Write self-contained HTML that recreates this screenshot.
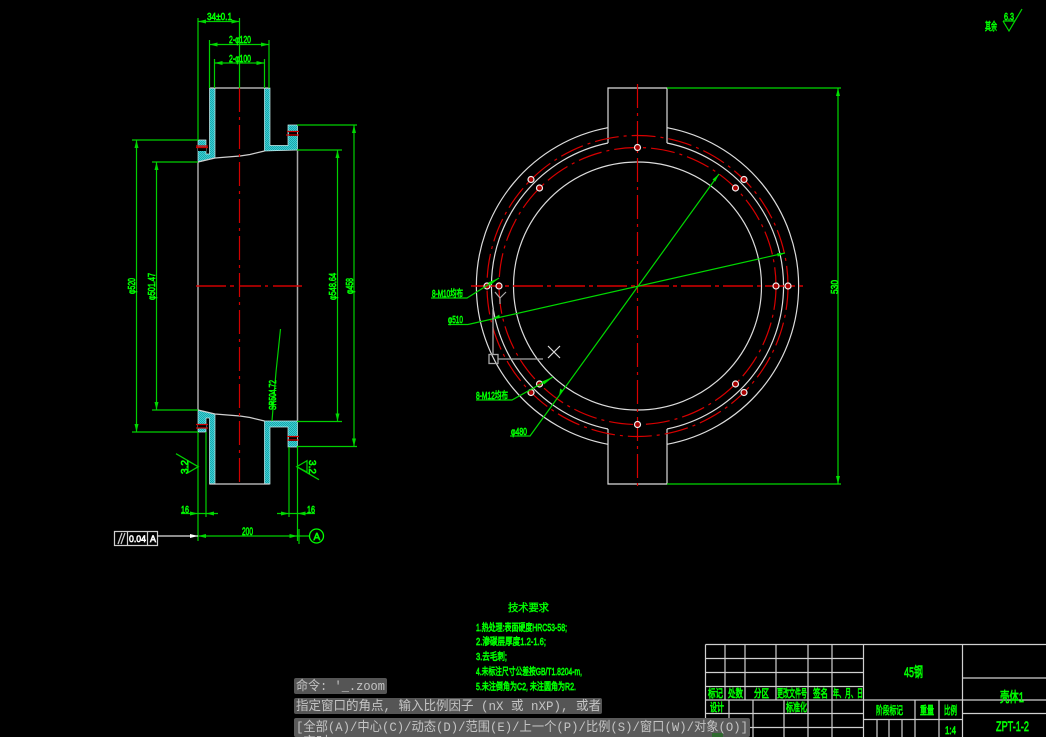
<!DOCTYPE html>
<html><head><meta charset="utf-8"><style>
html,body{margin:0;padding:0;background:#000;width:1046px;height:737px;overflow:hidden}
svg{display:block}
.t{font-family:"Liberation Sans","Noto Sans CJK SC",sans-serif;fill:#0f0;stroke:#0f0;stroke-width:.65}
.c{font-family:"Liberation Mono","Noto Sans CJK SC",monospace;fill:#c4c4c4;font-size:13px}
</style></head><body>
<svg width="1046" height="737" viewBox="0 0 1046 737" xmlns="http://www.w3.org/2000/svg">
<defs><pattern id="h" width="2" height="2" patternUnits="userSpaceOnUse"><rect width="2" height="2" fill="#3cd0d4"/><rect width="1" height="1" fill="#1aa4aa"/><rect x="1" y="1" width="1" height="1" fill="#1aa4aa"/></pattern></defs>
<rect width="1046" height="737" fill="#000"/>

<!-- hatch -->
<g fill="url(#h)" stroke="#c8eeee" stroke-width=".7">
<path d="M209.500 88H215V158L198 162V140H206V154H209.500Z"/>
<path d="M264.500 88H270V145.500H288V125H297.500V150L264.500 151Z"/>
<path d="M198 410L215 414V484H209.500V418H206V432H198Z"/>
<path d="M264.500 421H297.500V447H288V427H270V484H264.500Z"/>
</g>
<g fill="#000"><rect x="198" y="148" width="8" height="3"/><rect x="289" y="132" width="8" height="4"/><rect x="198" y="425" width="8" height="3"/><rect x="289" y="437" width="8" height="4"/></g>

<!-- white lines left view -->
<g fill="none" stroke="#d0d0d0" stroke-width="1.200">
<path d="M209.500 88H269.500"/><path d="M209.500 484H269.500"/>
<path d="M198 162V410M297.500 150V421" stroke="#a8a8a8" stroke-width="1.500"/>
<path d="M198 162L215 158L240 156L250 154.500L264.500 151"/>
<path d="M198 410L215 414L240 416L250 417.500L264.500 421"/>
</g>

<!-- red lines left -->
<g fill="none" stroke="#d00000" stroke-width="1.200">
<path d="M239.500 88V484" stroke-dasharray="24 5 3 5"/>
<path d="M196 286H226M230 286H234M240 286H261M265 286H268M273 286H302" stroke-width="1.500"/>
<path d="M196 147.500H208M196 146H208M287 131.500H299M286 135H299M196 424.500H208M196 428H208M287 436.500H299M287 440H299"/>
</g>

<!-- green dims left -->
<g fill="none" stroke="#00d000" stroke-width="1.200">
<path d="M198 18V140M239.500 18V88M198 21.500H239.500"/>
<path d="M209.500 40V88M269 40V88M209.500 44.500H269"/>
<path d="M214.500 59V88M264.500 59V88M214.500 63H264.500"/>
<path d="M132 140H198M136.500 140V432M132 432H198"/>
<path d="M152 162H198M156.500 162V410M152 410H198"/>
<path d="M297 125H357M354 125V446.500M297 446.500H357"/>
<path d="M297 150H342M337.500 150V421.500M297 421.500H342"/>
<path d="M280.500 329L276 372L272 421"/>
<path d="M198 432V541M206 432V517M297.500 447V541M289 447V517"/>
<path d="M181 513.500H218M277 513.500H315"/>
<path d="M198 536H309M299 529V544"/>
<path d="M176 453.700L198.300 466.700L188 472.700V461L198.300 466.700"/>
<path d="M319 479.700L296.700 466.700L307 460.700V472L296.700 466.700"/>
<circle cx="316.500" cy="536" r="7" stroke="#0f0" stroke-width="1.300"/>
</g>
<g fill="#00d800">
<path d="M198 21.500l8-2v4zM239.500 21.500l-8-2v4zM209.500 44.500l8-2v4zM269 44.500l-8-2v4zM214.500 63l8-2v4zM264.500 63l-8-2v4z"/>
<path d="M136.500 140l-2 8h4zM136.500 432l-2-8h4zM156.500 162l-2 8h4zM156.500 410l-2-8h4zM354 125l-2 8h4zM354 446.500l-2-8h4zM337.500 150l-2 8h4zM337.500 421.500l-2-8h4z"/>
<path d="M198 513.500l-8-2v4zM206 513.500l8-2v4zM289 513.500l-8-2v4zM297.500 513.500l8-2v4zM198 536l8-2v4zM297.500 536l-8-2v4zM272 410l-1.500-8h3z"/>
</g>

<!-- tolerance box -->
<g fill="none" stroke="#d0d0d0" stroke-width="1.200">
<rect x="114.500" y="531.500" width="43" height="14"/><path d="M127.500 531.500V545.500M147.500 531.500V545.500"/>
<path d="M118 544L122 533M121 544L125 533"/>
</g>
<path d="M157.500 536H198" stroke="#e0e0e0" stroke-width="1.200"/><path d="M198 536l-8-2v4z" fill="#fff"/>

<!-- right view: circles -->
<g fill="none" stroke="#dcdcdc" stroke-width="1.200">
<path d="M608 127.700A161 161 0 0 0 608 444.300M667 127.700A161 161 0 0 1 667 444.300"/>
<path d="M608 143A146 146 0 0 0 608 429M667 143A146 146 0 0 1 667 429"/>
<path d="M608 143V88H667V143M608 429V484H667V429"/>
<circle cx="637.500" cy="286" r="124"/>
</g>
<g fill="none" stroke="#d80000" stroke-width="1.200">
<circle cx="637.500" cy="286" r="150.500" stroke-dasharray="24 5 3 5"/>
<circle cx="637.500" cy="286" r="138.500" stroke-dasharray="24 5 3 5"/>
<path d="M637.500 84V488" stroke-dasharray="24 5 3 5"/>
<path d="M471 286H805" stroke-dasharray="30 4 4 4" stroke-width="1.500"/>
</g>
<g fill="#a00" stroke="#f0f0f0" stroke-width="1.200">
<circle cx="531" cy="179.500" r="3"/><circle cx="744" cy="179.500" r="3"/><circle cx="487" cy="286" r="3"/><circle cx="788" cy="286" r="3"/><circle cx="531" cy="392.500" r="3"/><circle cx="744" cy="392.500" r="3"/>
<circle cx="637.500" cy="147.500" r="3"/><circle cx="539.500" cy="188" r="3"/><circle cx="735.500" cy="188" r="3"/><circle cx="499" cy="286" r="3"/><circle cx="776" cy="286" r="3"/><circle cx="539.500" cy="384" r="3"/><circle cx="735.500" cy="384" r="3"/><circle cx="637.500" cy="424.500" r="3"/>
</g>
<!-- right view dims -->
<g fill="none" stroke="#00d800" stroke-width="1.200">
<path d="M667 88H841M667 484H841M838 88V484"/>
<path d="M510 436H530L719 174"/>
<path d="M448 324.500H468L785 253"/>
<path d="M431 298H467L499 278"/>
<path d="M476 400H512L553 377"/>
</g>
<g fill="#00e000">
<path d="M838 88l-2 8h4zM838 484l-2-8h4z"/>
<path d="M719 174l-6.500 5.500 2.800 2zM785 253l-8 .2 .8 3.400z"/>
<path d="M499 278l-11 4.500 2 3zM553 377l-11 4.500 2 3z"/>
<path d="M492 319l8-1 -.8-3.400zM559 396l4-5.500 -2.800-2z"/>
</g>

<!-- UCS -->
<g fill="none" stroke="#a8a8a8" stroke-width="1.300">
<path d="M493 309V354M498 359H543"/><rect x="489" y="354.500" width="9" height="9"/>
</g>
<path d="M495 292L500 298L506 292M500 298V304" fill="none" stroke="#aaa" stroke-width="1.200"/>
<path d="M548 346L560 358M560 346L548 358" stroke="#ddd" stroke-width="1.200"/>

<!-- top right -->
<path d="M1003 21H1015M1003 21L1009 31L1022 9" fill="none" stroke="#00d800" stroke-width="1.200"/>
<text class="t" x="985" y="30" font-size="11" textLength="12" lengthAdjust="spacingAndGlyphs">其余</text>
<text class="t" x="1004" y="20" font-size="10" textLength="10" lengthAdjust="spacingAndGlyphs">6.3</text>

<!-- title block -->
<g fill="none" stroke="#d0d0d0" stroke-width="1.200">
<path d="M705.500 644.500H1046M705.500 658.500H863.500M705.500 672.500H863.500M705.500 686.500H863.500M705.500 700H1046M705.500 713.500H863.500M705.500 727.500H863.500"/>
<path d="M705.500 644.500V737M725 644.500V700M745 644.500V700M776 644.500V700M808 644.500V737M832 644.500V737M863.500 644.500V737M962.500 644.500V737"/>
<path d="M729 700V737M753 700V737M784 700V737"/>
<path d="M863.500 719.500H962.500M962.500 678H1046M962.500 713.500H1046M915 700V737M939 700V737M877 719.500V737M889 719.500V737M902 719.500V737"/>
</g>
<text class="t" x="708" y="697" font-size="11" textLength="15" lengthAdjust="spacingAndGlyphs">标记</text>
<text class="t" x="728" y="697" font-size="11" textLength="15" lengthAdjust="spacingAndGlyphs">处数</text>
<text class="t" x="754" y="697" font-size="11" textLength="15" lengthAdjust="spacingAndGlyphs">分区</text>
<text class="t" x="777" y="697" font-size="11" textLength="30" lengthAdjust="spacingAndGlyphs">更改文件号</text>
<text class="t" x="813" y="697" font-size="11" textLength="15" lengthAdjust="spacingAndGlyphs">签名</text>
<text class="t" x="833" y="697" font-size="11" textLength="30" lengthAdjust="spacingAndGlyphs">年、月、日</text>
<text class="t" x="710" y="711" font-size="11" textLength="14" lengthAdjust="spacingAndGlyphs">设计</text>
<text class="t" x="786" y="711" font-size="11" textLength="21" lengthAdjust="spacingAndGlyphs">标准化</text>
<text class="t" x="904" y="677" font-size="14" textLength="19" lengthAdjust="spacingAndGlyphs">45钢</text>
<text class="t" x="876" y="714" font-size="11" textLength="27" lengthAdjust="spacingAndGlyphs">阶段标记</text>
<text class="t" x="920" y="714" font-size="11" textLength="14" lengthAdjust="spacingAndGlyphs">重量</text>
<text class="t" x="944" y="714" font-size="11" textLength="13" lengthAdjust="spacingAndGlyphs">比例</text>
<text class="t" x="945" y="734" font-size="11" textLength="11" lengthAdjust="spacingAndGlyphs">1:4</text>
<text class="t" x="1000" y="702" font-size="14" textLength="24" lengthAdjust="spacingAndGlyphs">壳体1</text>
<text class="t" x="996" y="731" font-size="14" textLength="33" lengthAdjust="spacingAndGlyphs">ZPT-1-2</text>

<!-- tech req -->
<text class="t" x="508" y="611" font-size="10" letter-spacing="1" style="font-size:10.500px;stroke-width:.35" textLength="42" lengthAdjust="spacing">技术要求</text>
<text class="t" x="476" y="631" font-size="10" textLength="91" lengthAdjust="spacingAndGlyphs">1.热处理:表面硬度HRC53-58;</text>
<text class="t" x="476" y="645" font-size="10" textLength="70" lengthAdjust="spacingAndGlyphs">2.渗碳层厚度1.2-1.6;</text>
<text class="t" x="476" y="660" font-size="10" textLength="31" lengthAdjust="spacingAndGlyphs">3.去毛刺;</text>
<text class="t" x="476" y="675" font-size="10" textLength="106" lengthAdjust="spacingAndGlyphs">4.未标注尺寸公差按GB/T1.8204-m,</text>
<text class="t" x="476" y="690" font-size="10" textLength="100" lengthAdjust="spacingAndGlyphs">5.未注倒角为C2, 未注圆角为R2.</text>

<!-- dim text -->
<text class="t" x="207" y="20" font-size="10" textLength="25" lengthAdjust="spacingAndGlyphs">34±0.1</text>
<text class="t" x="229" y="43" font-size="10" textLength="22" lengthAdjust="spacingAndGlyphs">2-φ120</text>
<text class="t" x="229" y="62" font-size="10" textLength="22" lengthAdjust="spacingAndGlyphs">2-φ100</text>
<text class="t" x="181" y="513" font-size="10" textLength="8" lengthAdjust="spacingAndGlyphs">16</text>
<text class="t" x="307" y="513" font-size="10" textLength="8" lengthAdjust="spacingAndGlyphs">16</text>
<text class="t" x="242" y="535" font-size="11" textLength="11" lengthAdjust="spacingAndGlyphs">200</text>
<text class="t" x="129" y="542" font-size="9" textLength="17" lengthAdjust="spacingAndGlyphs" style="fill:#fff;stroke:#fff">0.04</text>
<text class="t" x="150" y="542" font-size="9" style="fill:#fff;stroke:#fff">A</text>
<text class="t" x="313.500" y="540" font-size="10">A</text>
<text class="t" x="432" y="297" font-size="10" textLength="31" lengthAdjust="spacingAndGlyphs">8-M10均布</text>
<text class="t" x="448" y="323" font-size="10" textLength="15" lengthAdjust="spacingAndGlyphs">φ510</text>
<text class="t" x="476" y="399" font-size="10" textLength="32" lengthAdjust="spacingAndGlyphs">8-M12均布</text>
<text class="t" x="511" y="435" font-size="10" textLength="16" lengthAdjust="spacingAndGlyphs">φ480</text>
<g font-size="10">
<text class="t" transform="translate(135,294) rotate(-90)" textLength="16" lengthAdjust="spacingAndGlyphs">φ520</text>
<text class="t" transform="translate(155,300) rotate(-90)" textLength="27" lengthAdjust="spacingAndGlyphs">φ501.47</text>
<text class="t" transform="translate(336,300) rotate(-90)" textLength="27" lengthAdjust="spacingAndGlyphs">φ548.64</text>
<text class="t" transform="translate(353,294) rotate(-90)" textLength="16" lengthAdjust="spacingAndGlyphs">φ458</text>
<text class="t" transform="translate(276,410) rotate(-90)" textLength="30" lengthAdjust="spacingAndGlyphs">SR504.72</text>
<text class="t" transform="translate(188,474) rotate(-90)" textLength="14" lengthAdjust="spacingAndGlyphs">3.2</text>
<text class="t" transform="translate(309,460) rotate(90)" textLength="14" lengthAdjust="spacingAndGlyphs">3.2</text>
<text class="t" transform="translate(838,294) rotate(-90)" textLength="14" lengthAdjust="spacingAndGlyphs">530</text>
</g>

<!-- command overlay -->
<rect x="294" y="678" width="93" height="16" rx="2" fill="#555"/>
<rect x="294" y="698" width="308" height="16" rx="2" fill="#555"/>
<rect x="294" y="718" width="456" height="19" rx="2" fill="#5a5a5a"/>
<rect x="712" y="733" width="11" height="4" fill="#2f6a2f"/>
<text class="c" x="296" y="690" textLength="89" lengthAdjust="spacingAndGlyphs">命令: '_.zoom</text>
<text class="c" x="296" y="710" textLength="305" lengthAdjust="spacingAndGlyphs">指定窗口的角点, 输入比例因子 (nX 或 nXP), 或者</text>
<text class="c" x="296" y="731" textLength="452" lengthAdjust="spacingAndGlyphs">[全部(A)/中心(C)/动态(D)/范围(E)/上一个(P)/比例(S)/窗口(W)/对象(O)]</text>
<text class="c" x="303" y="746">实时</text>
</svg>
</body></html>
